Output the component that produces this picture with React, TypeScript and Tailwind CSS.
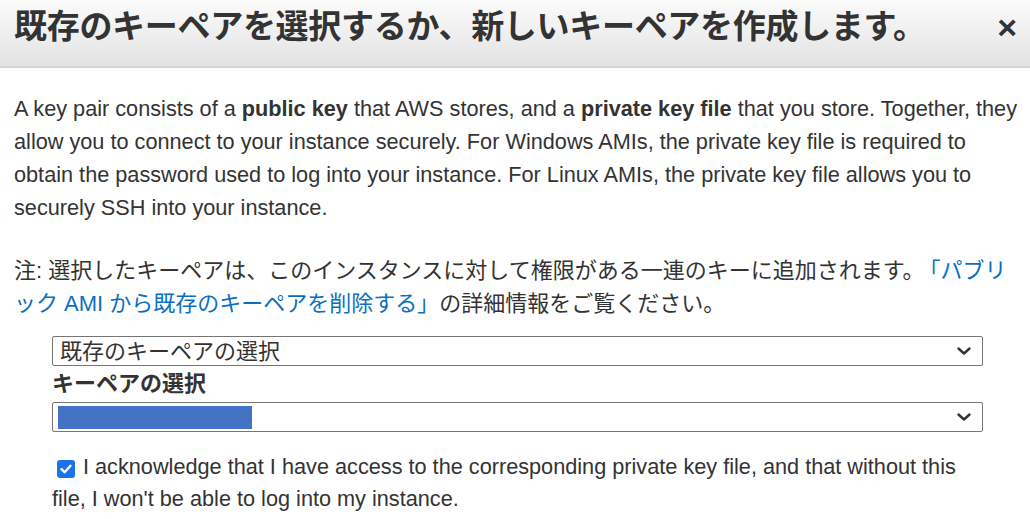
import React from "react";

const font = { fontFamily: '"Liberation Sans", "Noto Sans CJK JP", sans-serif' };

function Chevron() {
  return (
    <svg width="16" height="10" viewBox="0 0 16 10" className="shrink-0">
      <path d="M2.5 2.5 L8 7.5 L13.5 2.5" fill="none" stroke="#333" strokeWidth="2.4" strokeLinecap="round" strokeLinejoin="round" />
    </svg>
  );
}

export default function App() {
  return (
    <div className="w-[1030px] h-[519px] overflow-hidden bg-white text-[#333]" style={font}>
      <div className="h-[68px] flex items-start justify-between pl-[14px] pr-[13px] pt-[7px] bg-gradient-to-b from-[#fbfbfb] to-[#e3e3e3] border-b-2 border-[#d4d4d4]">
        <div className="text-[33px] leading-[40px] font-bold tracking-[-0.3px] text-[#333] whitespace-nowrap">既存のキーペアを選択するか、新しいキーペアを作成します。</div>
        <div className="text-[34px] leading-[40px] font-bold text-[#333]">×</div>
      </div>
      <div className="pl-[14px] pt-[24px]">
        <p className="text-[21.7px] leading-[33px] whitespace-nowrap">
          A key pair consists of a <b>public key</b> that AWS stores, and a <b>private key file</b> that you store. Together, they<br />
          allow you to connect to your instance securely. For Windows AMIs, the private key file is required to<br />
          obtain the password used to log into your instance. For Linux AMIs, the private key file allows you to<br />
          securely SSH into your instance.
        </p>
        <p className="mt-[30px] text-[22px] leading-[33px] whitespace-nowrap">
          注: 選択したキーペアは、このインスタンスに対して権限がある一連のキーに追加されます。<span className="ml-[5px] text-[#0a6fc2]">「パブリ<br />ック AMI から既存のキーペアを削除する」</span>の詳細情報をご覧ください。
        </p>
      </div>
      <div className="pl-[52px] pr-[47px] mt-[16px]">
        <div className="h-[30px] border border-[#767676] rounded-[2px] flex items-center justify-between pl-[7px] pr-[10px] text-[22px]">
          <span>既存のキーペアの選択</span>
          <Chevron />
        </div>
        <div className="text-[22px] font-bold leading-[36px]">キーペアの選択</div>
        <div className="h-[30px] border border-[#767676] rounded-[2px] flex items-center justify-between pl-[5px] pr-[10px]">
          <div className="w-[194px] h-[23px] bg-[#4472c4]" />
          <Chevron />
        </div>
        <div className="mt-[19px] text-[21.7px] leading-[32px]">
          <span className="inline-flex align-[-2px] ml-[5px] mr-[8px] w-[18px] h-[18px] rounded-[3px] bg-[#1a73e8] items-center justify-center">
            <svg width="14" height="14" viewBox="0 0 14 14">
              <path d="M2.5 7.2 L5.6 10.2 L11.5 3.8" fill="none" stroke="white" strokeWidth="2.4" strokeLinecap="round" strokeLinejoin="round" />
            </svg>
          </span>
          I acknowledge that I have access to the corresponding private key file, and that without this<br />
          file, I won't be able to log into my instance.
        </div>
      </div>
    </div>
  );
}
